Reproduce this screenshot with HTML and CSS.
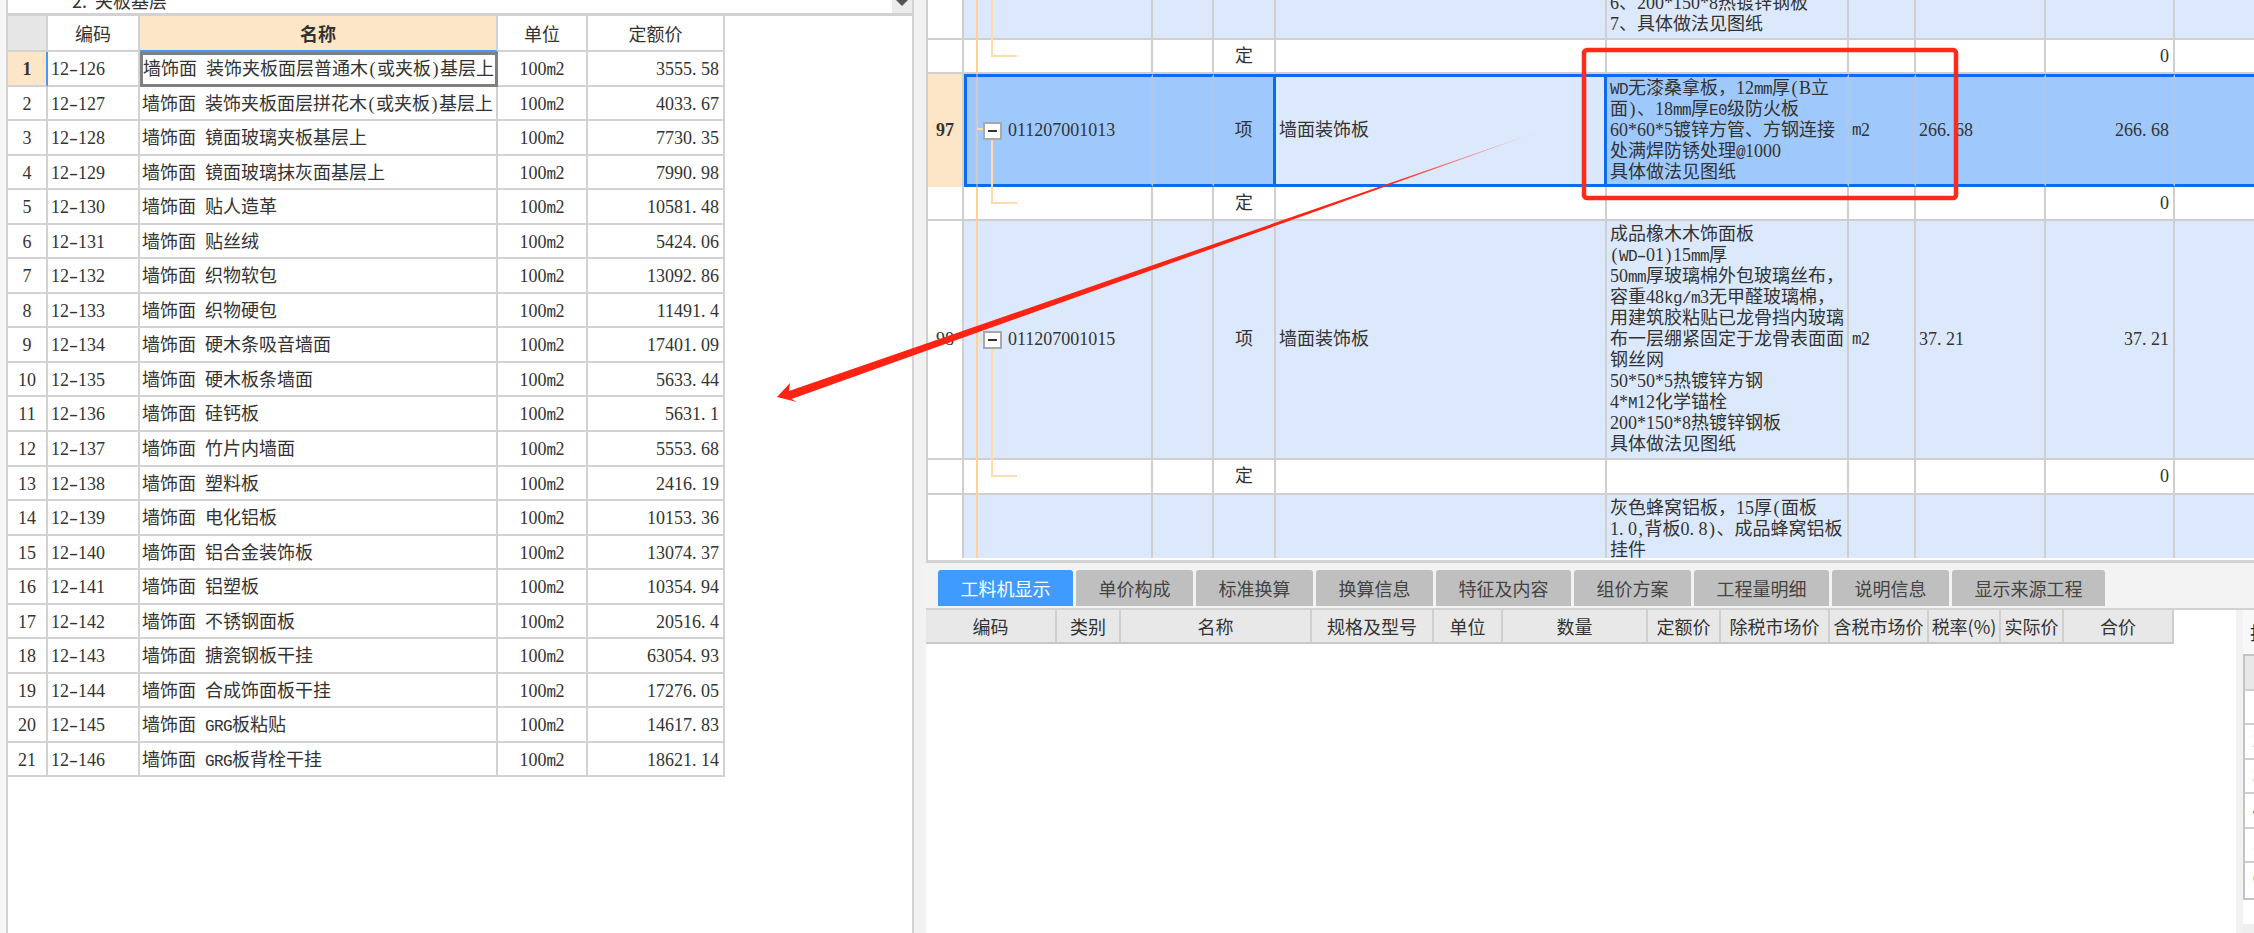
FILE: index.html
```html
<!DOCTYPE html>
<html lang="zh-CN">
<head>
  <meta charset="UTF-8">
  <title>清单定额</title>
  <link rel="stylesheet" href="styles.css">
</head>
<body>

  <div class="left">
    <div class="left-in">
      <div class="combo">
        <span class="combo-text">2.&nbsp;&nbsp;夹板基层</span>
        <span class="combo-btn"></span>
      </div>

      <div class="quota">
        <div class="q-row q-head">
          <div class="q-cell corner"></div>
          <div class="q-cell">编码</div>
          <div class="q-cell active">名称</div>
          <div class="q-cell">单位</div>
          <div class="q-cell">定额价</div>
        </div>
        <div class="q-row sel">
          <div class="q-cell num">1</div>
          <div class="q-cell code">12<i class="hy">-</i>126</div>
          <div class="q-cell name">墙饰面 装饰夹板面层普通木<i class="pn">(</i>或夹板<i class="pn">)</i>基层上</div>
          <div class="q-cell unit">100<span class="mn">m</span>2</div>
          <div class="q-cell price">3555<i class="pt">.</i>58</div>
        </div>
        <div class="q-row">
          <div class="q-cell num">2</div>
          <div class="q-cell code">12<i class="hy">-</i>127</div>
          <div class="q-cell name">墙饰面 装饰夹板面层拼花木<i class="pn">(</i>或夹板<i class="pn">)</i>基层上</div>
          <div class="q-cell unit">100<span class="mn">m</span>2</div>
          <div class="q-cell price">4033<i class="pt">.</i>67</div>
        </div>
        <div class="q-row">
          <div class="q-cell num">3</div>
          <div class="q-cell code">12<i class="hy">-</i>128</div>
          <div class="q-cell name">墙饰面 镜面玻璃夹板基层上</div>
          <div class="q-cell unit">100<span class="mn">m</span>2</div>
          <div class="q-cell price">7730<i class="pt">.</i>35</div>
        </div>
        <div class="q-row">
          <div class="q-cell num">4</div>
          <div class="q-cell code">12<i class="hy">-</i>129</div>
          <div class="q-cell name">墙饰面 镜面玻璃抹灰面基层上</div>
          <div class="q-cell unit">100<span class="mn">m</span>2</div>
          <div class="q-cell price">7990<i class="pt">.</i>98</div>
        </div>
        <div class="q-row">
          <div class="q-cell num">5</div>
          <div class="q-cell code">12<i class="hy">-</i>130</div>
          <div class="q-cell name">墙饰面 贴人造革</div>
          <div class="q-cell unit">100<span class="mn">m</span>2</div>
          <div class="q-cell price">10581<i class="pt">.</i>48</div>
        </div>
        <div class="q-row">
          <div class="q-cell num">6</div>
          <div class="q-cell code">12<i class="hy">-</i>131</div>
          <div class="q-cell name">墙饰面 贴丝绒</div>
          <div class="q-cell unit">100<span class="mn">m</span>2</div>
          <div class="q-cell price">5424<i class="pt">.</i>06</div>
        </div>
        <div class="q-row">
          <div class="q-cell num">7</div>
          <div class="q-cell code">12<i class="hy">-</i>132</div>
          <div class="q-cell name">墙饰面 织物软包</div>
          <div class="q-cell unit">100<span class="mn">m</span>2</div>
          <div class="q-cell price">13092<i class="pt">.</i>86</div>
        </div>
        <div class="q-row">
          <div class="q-cell num">8</div>
          <div class="q-cell code">12<i class="hy">-</i>133</div>
          <div class="q-cell name">墙饰面 织物硬包</div>
          <div class="q-cell unit">100<span class="mn">m</span>2</div>
          <div class="q-cell price">11491<i class="pt">.</i>4</div>
        </div>
        <div class="q-row">
          <div class="q-cell num">9</div>
          <div class="q-cell code">12<i class="hy">-</i>134</div>
          <div class="q-cell name">墙饰面 硬木条吸音墙面</div>
          <div class="q-cell unit">100<span class="mn">m</span>2</div>
          <div class="q-cell price">17401<i class="pt">.</i>09</div>
        </div>
        <div class="q-row">
          <div class="q-cell num">10</div>
          <div class="q-cell code">12<i class="hy">-</i>135</div>
          <div class="q-cell name">墙饰面 硬木板条墙面</div>
          <div class="q-cell unit">100<span class="mn">m</span>2</div>
          <div class="q-cell price">5633<i class="pt">.</i>44</div>
        </div>
        <div class="q-row">
          <div class="q-cell num">11</div>
          <div class="q-cell code">12<i class="hy">-</i>136</div>
          <div class="q-cell name">墙饰面 硅钙板</div>
          <div class="q-cell unit">100<span class="mn">m</span>2</div>
          <div class="q-cell price">5631<i class="pt">.</i>1</div>
        </div>
        <div class="q-row">
          <div class="q-cell num">12</div>
          <div class="q-cell code">12<i class="hy">-</i>137</div>
          <div class="q-cell name">墙饰面 竹片内墙面</div>
          <div class="q-cell unit">100<span class="mn">m</span>2</div>
          <div class="q-cell price">5553<i class="pt">.</i>68</div>
        </div>
        <div class="q-row">
          <div class="q-cell num">13</div>
          <div class="q-cell code">12<i class="hy">-</i>138</div>
          <div class="q-cell name">墙饰面 塑料板</div>
          <div class="q-cell unit">100<span class="mn">m</span>2</div>
          <div class="q-cell price">2416<i class="pt">.</i>19</div>
        </div>
        <div class="q-row">
          <div class="q-cell num">14</div>
          <div class="q-cell code">12<i class="hy">-</i>139</div>
          <div class="q-cell name">墙饰面 电化铝板</div>
          <div class="q-cell unit">100<span class="mn">m</span>2</div>
          <div class="q-cell price">10153<i class="pt">.</i>36</div>
        </div>
        <div class="q-row">
          <div class="q-cell num">15</div>
          <div class="q-cell code">12<i class="hy">-</i>140</div>
          <div class="q-cell name">墙饰面 铝合金装饰板</div>
          <div class="q-cell unit">100<span class="mn">m</span>2</div>
          <div class="q-cell price">13074<i class="pt">.</i>37</div>
        </div>
        <div class="q-row">
          <div class="q-cell num">16</div>
          <div class="q-cell code">12<i class="hy">-</i>141</div>
          <div class="q-cell name">墙饰面 铝塑板</div>
          <div class="q-cell unit">100<span class="mn">m</span>2</div>
          <div class="q-cell price">10354<i class="pt">.</i>94</div>
        </div>
        <div class="q-row">
          <div class="q-cell num">17</div>
          <div class="q-cell code">12<i class="hy">-</i>142</div>
          <div class="q-cell name">墙饰面 不锈钢面板</div>
          <div class="q-cell unit">100<span class="mn">m</span>2</div>
          <div class="q-cell price">20516<i class="pt">.</i>4</div>
        </div>
        <div class="q-row">
          <div class="q-cell num">18</div>
          <div class="q-cell code">12<i class="hy">-</i>143</div>
          <div class="q-cell name">墙饰面 搪瓷钢板干挂</div>
          <div class="q-cell unit">100<span class="mn">m</span>2</div>
          <div class="q-cell price">63054<i class="pt">.</i>93</div>
        </div>
        <div class="q-row">
          <div class="q-cell num">19</div>
          <div class="q-cell code">12<i class="hy">-</i>144</div>
          <div class="q-cell name">墙饰面 合成饰面板干挂</div>
          <div class="q-cell unit">100<span class="mn">m</span>2</div>
          <div class="q-cell price">17276<i class="pt">.</i>05</div>
        </div>
        <div class="q-row">
          <div class="q-cell num">20</div>
          <div class="q-cell code">12<i class="hy">-</i>145</div>
          <div class="q-cell name">墙饰面 <span class="mn">GRG</span>板粘贴</div>
          <div class="q-cell unit">100<span class="mn">m</span>2</div>
          <div class="q-cell price">14617<i class="pt">.</i>83</div>
        </div>
        <div class="q-row">
          <div class="q-cell num">21</div>
          <div class="q-cell code">12<i class="hy">-</i>146</div>
          <div class="q-cell name">墙饰面 <span class="mn">GRG</span>板背栓干挂</div>
          <div class="q-cell unit">100<span class="mn">m</span>2</div>
          <div class="q-cell price">18621<i class="pt">.</i>14</div>
        </div>
      </div>
    </div>
  </div>

  <div class="gutter"></div>

  <div class="right">
    <div class="rows">
      <!-- tree lines -->
      <svg class="tree" width="1328" height="560" viewBox="926 0 1328 560">
        <path class="tree-main" d="M977 0V74M977 187V558"/>
        <path class="tree-dim" d="M977 74V187"/>
        <path class="tree-sub" d="M992 0V56H1017M992 138V203H1017M992 349V476H1017M977 129H983M977 340H983"/>
      </svg>

      <div class="b-row tall-96">
        <div class="b-cell head"></div>
        <div class="b-cell tint"></div>
        <div class="b-cell tint"></div>
        <div class="b-cell tint"></div>
        <div class="b-cell tint"></div>
        <div class="b-cell tint spec end"><span>6、200*150*8热镀锌钢板<br>7、具体做法见图纸</span></div>
        <div class="b-cell tint"></div>
        <div class="b-cell tint"></div>
        <div class="b-cell tint"></div>
        <div class="b-cell tint"></div>
      </div>

      <div class="b-row tall-a">
        <div class="b-cell head"></div>
        <div class="b-cell"></div>
        <div class="b-cell"></div>
        <div class="b-cell mid">定</div>
        <div class="b-cell"></div>
        <div class="b-cell"></div>
        <div class="b-cell"></div>
        <div class="b-cell"></div>
        <div class="b-cell rt">0</div>
        <div class="b-cell"></div>
      </div>

      <div class="b-row tall-97 picked">
        <div class="b-cell head">97</div>
        <div class="b-cell hl first"><span class="minus"></span><span>011207001013</span></div>
        <div class="b-cell hl"></div>
        <div class="b-cell hl mid edge">项</div>
        <div class="b-cell tint edge">墙面装饰板</div>
        <div class="b-cell hl spec"><span><span class="mn">WD</span>无漆桑拿板，12<span class="mn">mm</span>厚<i class="pn">(</i>B立<br>面<i class="pn">)</i>、18<span class="mn">mm</span>厚<span class="mn">E0</span>级防火板<br>60*60*5镀锌方管、方钢连接<br>处满焊防锈处理<span class="mn">@</span>1000<br>具体做法见图纸</span></div>
        <div class="b-cell hl"><span class="mn">m</span>2</div>
        <div class="b-cell hl"><span>266<i class="pt">.</i>68</span></div>
        <div class="b-cell hl rt"><span>266<i class="pt">.</i>68</span></div>
        <div class="b-cell hl"></div>
      </div>

      <div class="b-row tall-a">
        <div class="b-cell head"></div>
        <div class="b-cell"></div>
        <div class="b-cell"></div>
        <div class="b-cell mid">定</div>
        <div class="b-cell"></div>
        <div class="b-cell"></div>
        <div class="b-cell"></div>
        <div class="b-cell"></div>
        <div class="b-cell rt">0</div>
        <div class="b-cell"></div>
      </div>

      <div class="b-row tall-98">
        <div class="b-cell head plain">98</div>
        <div class="b-cell tint first"><span class="minus"></span><span>011207001015</span></div>
        <div class="b-cell tint"></div>
        <div class="b-cell tint mid">项</div>
        <div class="b-cell tint">墙面装饰板</div>
        <div class="b-cell tint spec"><span>成品橡木木饰面板<br><i class="pn">(</i><span class="mn">WD</span><i class="hy">-</i>01<i class="pn">)</i>15<span class="mn">mm</span>厚<br>50<span class="mn">mm</span>厚玻璃棉外包玻璃丝布，<br>容重48<span class="mn">kg/m</span>3无甲醛玻璃棉，<br>用建筑胶粘贴已龙骨挡内玻璃<br>布一层绷紧固定于龙骨表面面<br>钢丝网<br>50*50*5热镀锌方钢<br>4*<span class="mn">M</span>12化学锚栓<br>200*150*8热镀锌钢板<br>具体做法见图纸</span></div>
        <div class="b-cell tint"><span class="mn">m</span>2</div>
        <div class="b-cell tint"><span>37<i class="pt">.</i>21</span></div>
        <div class="b-cell tint rt"><span>37<i class="pt">.</i>21</span></div>
        <div class="b-cell tint"></div>
      </div>

      <div class="b-row tall-b">
        <div class="b-cell head"></div>
        <div class="b-cell"></div>
        <div class="b-cell"></div>
        <div class="b-cell mid">定</div>
        <div class="b-cell"></div>
        <div class="b-cell"></div>
        <div class="b-cell"></div>
        <div class="b-cell"></div>
        <div class="b-cell rt">0</div>
        <div class="b-cell"></div>
      </div>

      <div class="b-row tall-99">
        <div class="b-cell head"></div>
        <div class="b-cell tint"></div>
        <div class="b-cell tint"></div>
        <div class="b-cell tint"></div>
        <div class="b-cell tint"></div>
        <div class="b-cell tint spec start"><span>灰色蜂窝铝板，15厚<i class="pn">(</i>面板<br>1<i class="pt">.</i>0<i class="pn">,</i>背板0<i class="pt">.</i>8<i class="pn">)</i>、成品蜂窝铝板<br>挂件</span></div>
        <div class="b-cell tint"></div>
        <div class="b-cell tint"></div>
        <div class="b-cell tint"></div>
        <div class="b-cell tint"></div>
      </div>
    </div>

    <div class="tabbar">
      <div class="tab on">工料机显示</div>
      <div class="tab">单价构成</div>
      <div class="tab">标准换算</div>
      <div class="tab">换算信息</div>
      <div class="tab">特征及内容</div>
      <div class="tab">组价方案</div>
      <div class="tab">工程量明细</div>
      <div class="tab">说明信息</div>
      <div class="tab">显示来源工程</div>
    </div>

    <div class="lower">
      <div class="detail">
        <div class="d-head">
          <div>编码</div>
          <div>类别</div>
          <div>名称</div>
          <div>规格及型号</div>
          <div>单位</div>
          <div>数量</div>
          <div>定额价</div>
          <div>除税市场价</div>
          <div>含税市场价</div>
          <div>税率(%)</div>
          <div>实际价</div>
          <div>合价</div>
        </div>
      </div>

      <div class="side">
        <div class="side-in">
          <div class="side-title">批</div>
          <div class="side-table">
            <div class="side-row side-top"></div>
            <div class="side-row"></div>
            <div class="side-row">2</div>
            <div class="side-row">3</div>
            <div class="side-row">4</div>
            <div class="side-row">5</div>
            <div class="side-row">6</div>
          </div>
          <div class="side-foot"></div>
        </div>
      </div>
    </div>
  </div>

  <!-- red annotation drawn over the screenshot -->
  <svg class="markup" width="2254" height="933" viewBox="0 0 2254 933">
    <defs>
      <linearGradient id="fade" gradientUnits="userSpaceOnUse" x1="1552" y1="127" x2="789" y2="395">
        <stop offset="0" stop-color="#ff2314" stop-opacity="0"/>
        <stop offset="0.22" stop-color="#ff2314"/>
      </linearGradient>
    </defs>
    <rect class="mark-box" x="1584" y="50" width="372" height="148" rx="3"/>
    <polygon fill="url(#fade)" points="777,397 790,383 789,391 1552,127 791.5,399 797,402"/>
  </svg>

</body>
</html>
```

FILE: styles.css
```css
* {
  box-sizing: border-box;
}

html, body {
  margin: 0;
  height: 100%;
}

body {
  width: 2254px;
  height: 933px;
  display: flex;
  position: relative;
  overflow: hidden;
  background: #f6f6f6;
  color: #333;
  font-family: "Liberation Serif", "Noto Sans CJK SC", serif;
  font-size: 18px;
}

i {
  font-style: normal;
}

/* half width helpers, the grid font has all latin at 9px */
.mn {
  font-family: "Liberation Mono", monospace;
  font-size: 16px;
  letter-spacing: -0.6px;
  line-height: 0;
}

.pt {
  letter-spacing: 4.5px;
}

.pn {
  padding: 0 1.5px;
}

.hy {
  display: inline-block;
  width: 9px;
  text-align: center;
  line-height: 1;
  transform: scaleX(1.5);
}

/* left panel */
.left {
  width: 914px;
  flex: none;
  padding-left: 6px;
}

.left-in {
  height: 100%;
  background: #fff;
  border-left: 2px solid #d2d2d2;
  border-right: 2px solid #d2d2d2;
}

.combo {
  height: 16px;
  display: flex;
  justify-content: space-between;
  overflow: hidden;
  border-bottom: 3px solid #d2d2d2;
}

.combo-text {
  align-self: flex-end;
  margin-left: 64px;
  padding-bottom: 4px;
  line-height: 18px;
  font-family: "Noto Sans CJK SC", sans-serif;
}

.combo-btn {
  width: 20px;
  background: #ececec;
  display: flex;
  justify-content: center;
}

.combo-btn::before {
  content: "";
  height: 0;
  border-top: 6px solid #555;
  border-left: 6px solid transparent;
  border-right: 6px solid transparent;
}

.q-row {
  display: grid;
  grid-template-columns: 40px 92px 358px 90px 137px;
  width: 717px;
  height: 34.55px;
}

.q-cell {
  border-right: 2px solid #d2d2d2;
  border-bottom: 2px solid #d2d2d2;
  line-height: 34px;
  white-space: nowrap;
  overflow: hidden;
}

.q-head {
  height: 36px;
  text-align: center;
  font-family: "Noto Sans CJK SC", sans-serif;
}

.q-head .q-cell {
  line-height: 35px;
}

.q-head .corner {
  background: #e6e6e6;
}

.q-head .active {
  background: #fde6c8;
  font-weight: bold;
  border-bottom-color: #3f9bff;
}

.num {
  text-align: center;
}

.code {
  padding-left: 3px;
}

.name {
  padding-left: 2px;
  word-spacing: 4.5px;
}

.unit {
  text-align: center;
}

.price {
  text-align: right;
  padding-right: 4px;
}

.sel .num {
  background: #fde6c8;
  font-weight: bold;
  border-right-color: #3f9bff;
}

.sel .name {
  border: 3px solid #808080;
  line-height: 28px;
  padding-left: 0;
}

/* gutter between panels */
.gutter {
  width: 12px;
  flex: none;
  background: #f2f2f2;
}

/* right panel */
.right {
  flex: 1;
  min-width: 0;
  display: flex;
  flex-direction: column;
}

.rows {
  position: relative;
  flex: none;
  height: 563px;
  background: #fff;
  border-bottom: 3px solid #d2d2d2;
  border-left: 2px solid #cfcfcf;
  overflow: hidden;
}

.tree {
  position: absolute;
  left: -2px;
  top: 0;
  z-index: 1;
  fill: none;
  stroke-width: 2;
}

.tree-main {
  stroke: #ffd19a;
}

.tree-dim {
  stroke: #ffd19a;
  opacity: 0.45;
}

.tree-sub {
  stroke: #ffdcb0;
}

.b-row {
  display: grid;
  grid-template-columns: 36px 189px 61px 62px 331px 242px 67px 130px 129px 79px;
}

.tall-96 { height: 40px; }
.tall-a { height: 34px; }
.tall-97 { height: 113px; }
.tall-98 { height: 239px; }
.tall-b { height: 35px; }
.tall-99 { height: 63px; }

.b-cell {
  display: flex;
  align-items: center;
  padding-left: 3px;
  border-right: 2px solid #cfcfcf;
  border-bottom: 2px solid #cfcfcf;
  white-space: nowrap;
  overflow: hidden;
  line-height: 21px;
}

.b-row .b-cell:last-child {
  border-right: none;
}

.tint {
  background: #dce9fd;
}

.hl {
  background: #9fc9fd;
  border-right-color: #b0c8e6;
}

.head {
  justify-content: center;
  padding-left: 0;
  font-weight: bold;
}

.head.plain {
  font-weight: normal;
}

.mid {
  justify-content: center;
  padding-left: 0;
}

.rt {
  justify-content: flex-end;
  padding-right: 4px;
}

.spec {
  padding-left: 3px;
}

.end {
  align-items: flex-end;
  padding-bottom: 3px;
}

.start {
  align-items: flex-start;
  padding-top: 3px;
}

.tall-99 .b-cell {
  border-bottom: none;
}

.first {
  padding-left: 19px;
  gap: 6px;
}

.minus {
  position: relative;
  z-index: 2;
  flex: none;
  width: 19px;
  height: 18px;
  background: #fff;
  border: 2px solid #a9a9a9;
  display: flex;
  align-items: center;
  justify-content: center;
}

.minus::before {
  content: "";
  width: 9px;
  height: 2px;
  background: #333;
}

.picked .b-cell {
  border-top: 3px solid #0a6cf5;
  border-bottom: 3px solid #0a6cf5;
}

.picked .head {
  background: #fde6c8;
  border-top: none;
  border-bottom: none;
  border-right: 2px solid #cfcfcf;
}

.picked .first {
  border-left: 3px solid #0a6cf5;
  padding-left: 16px;
}

.picked .edge {
  border-right: 3px solid #0a6cf5;
}

/* tabs */
.tabbar {
  flex: none;
  height: 47px;
  display: flex;
  align-items: flex-end;
  gap: 3px;
  padding: 0 0 2px 12px;
  background: #f3f3f3;
  border-bottom: 2px solid #d2d2d2;
  font-family: "Noto Sans CJK SC", sans-serif;
}

.tab {
  height: 36px;
  padding: 0 22.5px;
  line-height: 36px;
  background: #bfbfbf;
  color: #444;
  border-radius: 3px 3px 0 0;
}

.tab.on {
  background: #3f9bff;
  color: #fff;
}

/* lower grid */
.lower {
  flex: 1;
  min-height: 0;
  display: flex;
  background: #fff;
}

.detail {
  flex: 1;
  min-width: 0;
}

.d-head {
  display: grid;
  grid-template-columns: 131px 64px 191px 122px 69px 145px 73px 109px 99px 72px 63px 110px;
  width: 1248px;
  height: 34px;
  background: #e8e8e8;
  border-bottom: 2px solid #c9c9c9;
  text-align: center;
  font-family: "Noto Sans CJK SC", sans-serif;
  line-height: 32px;
  white-space: nowrap;
}

.d-head div {
  border-right: 2px solid #cfcfcf;
}

.side {
  width: 18px;
  flex: none;
  padding-left: 7px;
  background: #f2f2f2;
}

.side-in {
  height: 100%;
  background: #fff;
  display: flex;
  flex-direction: column;
  overflow: hidden;
}

.side-title {
  height: 44px;
  padding-left: 7px;
  line-height: 44px;
  background: #f8f8f8;
  color: #222;
  font-family: "Noto Sans CJK SC", sans-serif;
}

.side-table {
  border-left: 2px solid #c4c4c4;
  border-bottom: 2px solid #c4c4c4;
  border-top: 2px solid #c4c4c4;
}

.side-row {
  height: 34.5px;
  padding-left: 8px;
  line-height: 32px;
  border-bottom: 2px solid #cfcfcf;
}

.side-row:last-child {
  border-bottom: none;
}

.side-top {
  background: #e8e8e8;
}

.side-foot {
  margin-top: auto;
  height: 9px;
  background: #efefef;
}

/* annotation */
.markup {
  position: absolute;
  left: 0;
  top: 0;
  z-index: 5;
  pointer-events: none;
}

.mark-box {
  fill: none;
  stroke: #ff2a17;
  stroke-width: 4.5;
}
```
